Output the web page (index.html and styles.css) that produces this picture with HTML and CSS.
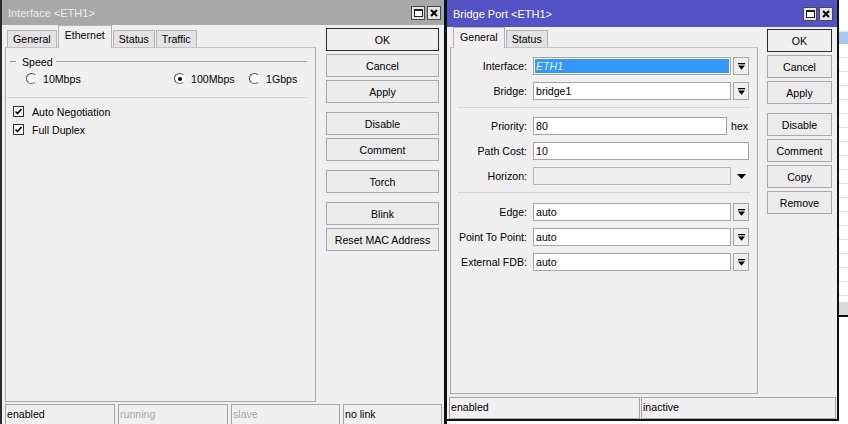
FILE: index.html
```html
<!DOCTYPE html>
<html>
<head>
<meta charset="utf-8">
<title>Interface / Bridge Port</title>
<link rel="stylesheet" href="styles.css">
</head>
<body>
<div class="desk">
  <div class="bglist">
    <div class="bg-head"></div>
    <div class="bg-sel"></div>
    <div class="bg-rows"></div>
    <div class="bg-foot"></div>
  </div>

  <section class="win win-iface">
    <header class="tb tb-off">
      <span class="tt">Interface &lt;ETH1&gt;</span>
      <span class="tbtns">
        <span class="tbb"><span class="maxico"></span></span>
        <span class="tbb"><svg width="8" height="8" viewBox="0 0 8 8"><path d="M1 1L7 7M7 1L1 7" stroke="#000" stroke-width="2"/></svg></span>
      </span>
    </header>
    <div class="main main1">
      <div class="leftcol">
        <div class="tabs tabs1">
          <span class="tab">General</span>
          <span class="tab sel">Ethernet</span>
          <span class="tab">Status</span>
          <span class="tab">Traffic</span>
        </div>
        <div class="panel panel1">
          <div class="legend"><span class="dash"></span><span class="legtext">Speed</span><span class="rule"></span></div>
          <div class="radios">
            <span class="ritem r1"><span class="radio"></span>10Mbps</span>
            <span class="ritem r2"><span class="radio on"></span>100Mbps</span>
            <span class="ritem"><span class="radio"></span>1Gbps</span>
          </div>
          <div class="sep1"></div>
          <div class="chkrow first"><span class="chk"><svg width="9" height="9" viewBox="0 0 9 9"><polyline points="1.5,4.5 3.5,6.5 7.5,2" fill="none" stroke="#000" stroke-width="1.7"/></svg></span>Auto Negotiation</div>
          <div class="chkrow"><span class="chk"><svg width="9" height="9" viewBox="0 0 9 9"><polyline points="1.5,4.5 3.5,6.5 7.5,2" fill="none" stroke="#000" stroke-width="1.7"/></svg></span>Full Duplex</div>
        </div>
      </div>
      <div class="btncol btncol1">
        <span class="btn def">OK</span>
        <span class="btn">Cancel</span>
        <span class="btn">Apply</span>
        <span class="btn sepb">Disable</span>
        <span class="btn">Comment</span>
        <span class="btn sepb">Torch</span>
        <span class="btn sepb">Blink</span>
        <span class="btn">Reset MAC Address</span>
      </div>
    </div>
    <div class="status status1">
      <span class="cell w110">enabled</span>
      <span class="cell w110 dim">running</span>
      <span class="cell w109 dim">slave</span>
      <span class="cell w99">no link</span>
    </div>
  </section>

  <section class="win win-bridge">
    <header class="tb tb-on">
      <span class="tt">Bridge Port &lt;ETH1&gt;</span>
      <span class="tbtns">
        <span class="tbb"><span class="maxico"></span></span>
        <span class="tbb"><svg width="8" height="8" viewBox="0 0 8 8"><path d="M1 1L7 7M7 1L1 7" stroke="#000" stroke-width="2"/></svg></span>
      </span>
    </header>
    <div class="main main2">
      <div class="leftcol">
        <div class="tabs tabs2">
          <span class="tab sel">General</span>
          <span class="tab">Status</span>
        </div>
        <div class="panel panel2">
          <div class="frow">
            <span class="lbl">Interface:</span>
            <span class="field fw198 hl"><span class="hltext">ETH1</span></span>
            <span class="dd"><svg width="7" height="7" viewBox="0 0 7 7"><rect x="0" y="0" width="7" height="1.3"/><polygon points="0,2.6 7,2.6 3.5,6.8"/></svg></span>
          </div>
          <div class="frow">
            <span class="lbl">Bridge:</span>
            <span class="field fw198">bridge1</span>
            <span class="dd"><svg width="7" height="7" viewBox="0 0 7 7"><rect x="0" y="0" width="7" height="1.3"/><polygon points="0,2.6 7,2.6 3.5,6.8"/></svg></span>
          </div>
          <div class="fsep"></div>
          <div class="frow">
            <span class="lbl">Priority:</span>
            <span class="field fw194">80</span>
            <span class="unit">hex</span>
          </div>
          <div class="frow">
            <span class="lbl">Path Cost:</span>
            <span class="field fw216">10</span>
          </div>
          <div class="frow">
            <span class="lbl">Horizon:</span>
            <span class="field fw198 off"></span>
            <span class="arrow"><svg width="9" height="5" viewBox="0 0 9 5"><polygon points="0,0 9,0 4.5,5"/></svg></span>
          </div>
          <div class="fsep last"></div>
          <div class="frow">
            <span class="lbl">Edge:</span>
            <span class="field fw198">auto</span>
            <span class="dd"><svg width="7" height="7" viewBox="0 0 7 7"><rect x="0" y="0" width="7" height="1.3"/><polygon points="0,2.6 7,2.6 3.5,6.8"/></svg></span>
          </div>
          <div class="frow">
            <span class="lbl">Point To Point:</span>
            <span class="field fw198">auto</span>
            <span class="dd"><svg width="7" height="7" viewBox="0 0 7 7"><rect x="0" y="0" width="7" height="1.3"/><polygon points="0,2.6 7,2.6 3.5,6.8"/></svg></span>
          </div>
          <div class="frow">
            <span class="lbl">External FDB:</span>
            <span class="field fw198">auto</span>
            <span class="dd"><svg width="7" height="7" viewBox="0 0 7 7"><rect x="0" y="0" width="7" height="1.3"/><polygon points="0,2.6 7,2.6 3.5,6.8"/></svg></span>
          </div>
        </div>
      </div>
      <div class="btncol btncol2">
        <span class="btn def">OK</span>
        <span class="btn">Cancel</span>
        <span class="btn">Apply</span>
        <span class="btn sepb">Disable</span>
        <span class="btn">Comment</span>
        <span class="btn">Copy</span>
        <span class="btn">Remove</span>
      </div>
    </div>
    <div class="status status2">
      <span class="cell w191">enabled</span>
      <span class="cell w195">inactive</span>
    </div>
  </section>
</div>
</body>
</html>
```
FILE: styles.css
```css
* { box-sizing: border-box; }
html, body { margin: 0; padding: 0; }
body {
  width: 848px; height: 424px; overflow: hidden; background: #fff;
  font-family: "Liberation Sans", Arial, sans-serif; font-size: 10.6px; color: #000;
}
.desk { position: relative; width: 848px; height: 424px; overflow: hidden; }

/* background list window (peeking at right) */
.bglist { position: absolute; left: 839px; top: 0; width: 9px; height: 424px; display: flex; flex-direction: column; background: #fff; }
.bg-head { height: 32px; background: #fff; border-bottom: 1px solid #e4e4e4; }
.bg-sel { height: 12px; background: #a9c9ef; }
.bg-rows { height: 258px; background: repeating-linear-gradient(to bottom, #fff 0, #fff 13px, #e2e2e2 13px, #e2e2e2 14px); }
.bg-foot { height: 15px; background: #dadada; border-bottom: 2px solid #111; }

/* windows */
.win { position: absolute; top: 0; display: flex; flex-direction: column; background: #f0f0f0; }
.win-iface { left: 0; width: 447px; height: 440px; border-left: 2px solid #2c2c2c; border-right: 3px solid #111; }
.win-bridge { left: 445px; width: 394px; height: 421px; border-left: 2px solid #111; border-right: 2px solid #111; border-bottom: 2px solid #111; }

.tb { display: flex; align-items: center; justify-content: space-between; flex: none; }
.tb-off { height: 25px; background: #a8a8a8; color: #ededed; padding: 0 3px 0 6px; }
.tb-on { height: 27px; background: #5353c6; color: #fff; padding: 0 4px 0 6px; }
.tt { font-size: 11px; }
.tbtns { display: flex; gap: 2px; }
.tbb { width: 14px; height: 14px; border: 1px solid #4a4a4a; background: #e4e4e4; display: flex; align-items: center; justify-content: center; }
.maxico { width: 9px; height: 8px; border: 1px solid #222; border-top-width: 2px; background: #fff; }

.main { display: flex; flex: none; padding-left: 3px; }
.main1 { height: 379px; }
.main2 { height: 370px; }
.leftcol { display: flex; flex-direction: column; }
.main1 .leftcol { width: 311px; }
.main2 .leftcol { width: 308px; }

.tabs { display: flex; align-items: flex-end; gap: 1px; position: relative; z-index: 1; }
.tabs1 { height: 22px; padding-left: 2px; }
.tabs2 { height: 20px; padding-left: 3px; }
.tab {
  height: 17px; line-height: 16px; padding: 0 5px; background: #e3e3e3;
  border: 1px solid #b4b4b4; border-bottom: none;
}
.tab.sel { background: #f0f0f0; margin-bottom: -1px; line-height: 18px; padding: 0 6px; }
.tabs1 .tab.sel { height: 23px; }
.tabs2 .tab.sel { height: 21px; }

.panel { border: 1px solid #a9a9a9; border-top-color: #c4c4c4; background: #f0f0f0; display: flex; flex-direction: column; }
.panel1 { height: 355px; }
.panel2 { height: 347px; padding-top: 9px; }

/* interface panel */
.legend { display: flex; align-items: center; height: 13px; margin-top: 7px; }
.dash { width: 6px; height: 1px; background: #9a9a9a; margin-left: 4px; }
.legtext { margin: 0 3px 0 6px; }
.rule { flex: 1; height: 1px; background: #a4a4a4; margin-right: 8px; }
.radios { display: flex; height: 13px; margin-top: 4px; padding-left: 20px; }
.ritem { display: flex; align-items: center; gap: 6px; }
.r1 { width: 148px; }
.r2 { width: 75px; }
.radio {
  width: 11px; height: 11px; border-radius: 50%; background: #fff; position: relative;
  border: 1px solid; border-color: #4a4a4a #fdfdfd #7a7a7a #4a4a4a;
}
.radio.on::after { content: ""; position: absolute; left: 2.5px; top: 2.5px; width: 4px; height: 4px; border-radius: 50%; background: #000; }
.sep1 { height: 1px; background: #d4d4d4; margin: 12px 8px 0 1px; }
.chkrow { display: flex; align-items: center; gap: 8px; height: 13px; padding-left: 7px; margin-top: 5px; }
.chkrow.first { margin-top: 7px; }
.chk { width: 11px; height: 11px; border: 1px solid #333; background: #fff; display: flex; align-items: center; justify-content: center; }

/* bridge form */
.frow { display: flex; align-items: center; height: 18px; margin-bottom: 7px; }
.lbl { width: 82px; text-align: right; padding-right: 6px; white-space: nowrap; }
.field { height: 18px; border: 1px solid #a6a6a6; background: #fff; padding-left: 2px; line-height: 16px; }
.fw198 { width: 198px; }
.fw194 { width: 194px; }
.fw216 { width: 216px; }
.field.hl { padding: 1px; }
.hltext { display: block; height: 14px; background: #3399ff; color: #e4efff; font-style: italic; line-height: 14px; padding-left: 1px; }
.field.off { background: #f0f0f0; border-color: #b6b6b6; }
.dd { width: 16px; height: 18px; margin-left: 2px; border: 1px solid #a6a6a6; background: #f0f0f0; display: flex; align-items: center; justify-content: center; }
.unit { margin-left: 4px; }
.arrow { margin-left: 6px; display: flex; align-items: center; }
.fsep { height: 1px; background: #d6d6d6; margin: 0 7px 9px 7px; }
.fsep.last { margin-bottom: 10px; }

/* buttons */
.btncol { display: flex; flex-direction: column; gap: 3px; }
.btncol1 { width: 113px; margin-left: 10px; padding-top: 3px; }
.btncol2 { width: 65px; margin-left: 9px; padding-top: 2px; }
.btn { height: 23px; border: 1px solid #a9a9a9; background: #ececec; display: flex; align-items: center; justify-content: center; white-space: nowrap; }
.btn.def { border-color: #2a2a2a; background: #f0f0f0; }
.btn.sepb { margin-top: 6px; }

/* status */
.status { display: flex; flex: none; }
.status1 { height: 24px; padding-left: 3px; gap: 3px; }
.status2 { height: 22px; padding-left: 2px; gap: 1px; }
.cell { height: 100%; border: 1px solid #a4a4a4; padding: 3px 0 0 1px; line-height: 13px; }
.status1 .cell { border-bottom: none; }
.dim { color: #a8a8a8; }
.w110 { width: 110px; }
.w109 { width: 109px; }
.w99 { width: 99px; }
.w191 { width: 191px; }
.w195 { width: 195px; }
```
